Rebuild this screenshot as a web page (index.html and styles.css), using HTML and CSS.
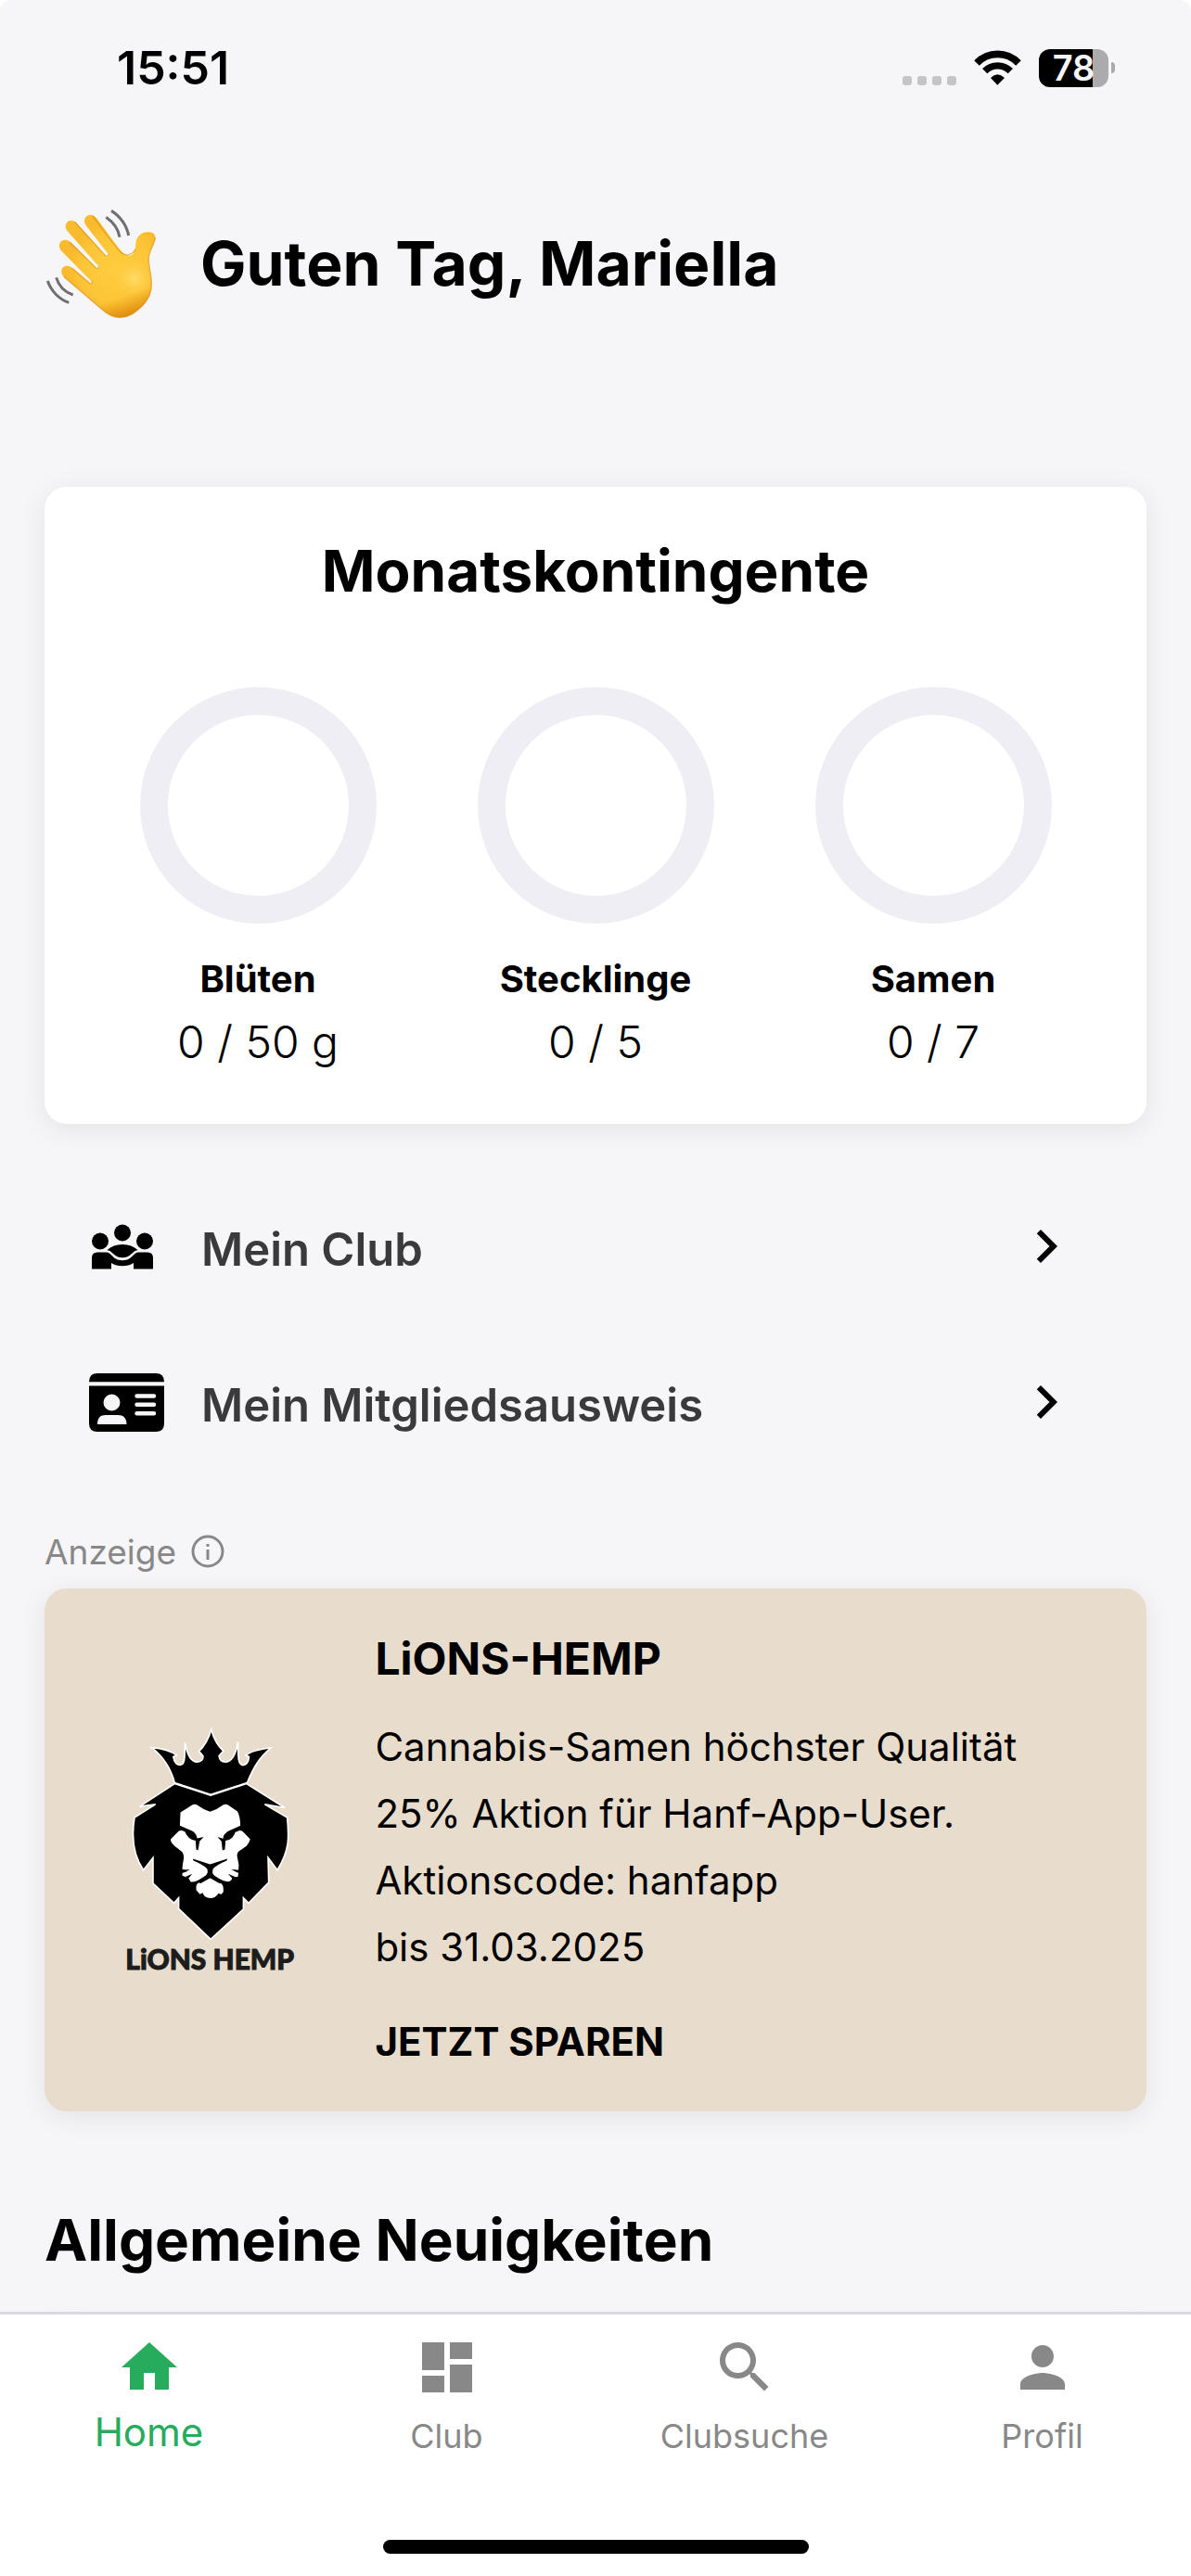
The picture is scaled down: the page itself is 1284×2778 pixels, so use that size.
FILE: index.html
```html
<!DOCTYPE html>
<html lang="de">
<head>
    <meta charset="UTF-8">
    <meta name="viewport" content="width=device-width, initial-scale=1.0">
    <title>Home</title>
    <link rel="stylesheet" href="styles.css">
</head>
<body>
    <div class="app">
        <div class="statusbar">
            <span class="clock">15:51</span>
            <div class="status-icons">
                <div class="signal"><span></span><span></span><span></span><span></span></div>
                <svg class="wifi" viewBox="330 70 153 114" aria-hidden="true">
                    <path d="M339 112A93 93 0 0 1 474 112" fill="none" stroke="#000" stroke-width="23"/>
                    <path d="M365 138A58 58 0 0 1 448 138" fill="none" stroke="#000" stroke-width="22"/>
                    <path d="M384 160Q406 138 429 160L406 183Z"/>
                </svg>
                <div class="battery"><span class="battery-level">78</span><span class="battery-tip"></span></div>
            </div>
        </div>

        <main class="content">
            <header class="greeting">
                <svg class="wave" viewBox="54 72 366 360" aria-hidden="true">
                    <defs>
                        <radialGradient id="skin" gradientUnits="userSpaceOnUse" cx="290" cy="270" r="200">
                            <stop offset="0" stop-color="#ffcd3f"/>
                            <stop offset="0.55" stop-color="#fdc538"/>
                            <stop offset="0.8" stop-color="#f9b92c"/>
                            <stop offset="1" stop-color="#f9bb30"/>
                        </radialGradient>
                        <linearGradient id="shade" gradientUnits="userSpaceOnUse" x1="300" y1="360" x2="325" y2="435">
                            <stop offset="0" stop-color="#d98200" stop-opacity="0"/>
                            <stop offset="1" stop-color="#d07a00" stop-opacity="0.85"/>
                        </linearGradient>
                        <radialGradient id="glow" gradientUnits="userSpaceOnUse" cx="345" cy="300" r="60">
                            <stop offset="0" stop-color="#ffdc6a"/>
                            <stop offset="1" stop-color="#ffd04a" stop-opacity="0"/>
                        </radialGradient>
                        <path id="hand" d="M412 168C412 154 398 150 384 151C364 152 351 168 349 186C348 210 343 228 326 227C314 226 304 214 292 200L222 106C212 92 194 92 186 104C180 114 184 122 190 132L260 222C264 229 257 233 252 227L158 122C148 110 131 111 125 122C118 135 124 143 132 152L229 262C233 270 227 273 221 267L142 187C128 172 112 174 105 184C98 195 103 205 110 213L205 310C211 317 207 321 200 316L147 270C136 258 119 258 112 267C104 277 110 289 118 297L240 401C262 420 282 428 300 427C328 426 348 412 372 388C394 364 401 342 400 315C400 285 389 262 391 234C393 208 411 190 412 168Z"/>
                    </defs>
                    <use href="#hand" fill="url(#skin)"/>
                    <use href="#hand" fill="url(#glow)"/>
                    <use href="#hand" fill="url(#shade)"/>
                    <path d="M210 99L260 166L296 212Q326 240 349 206M152 118L250 226Q262 232 260 222M136 184L221 267Q230 273 229 262M143 268L200 316Q210 320 206 310M116 295L240 401C262 420 282 428 300 427C328 426 348 412 372 388C394 364 401 342 400 315C400 285 389 262 391 234C393 208 411 190 412 168" fill="none" stroke="#d98b12" stroke-width="4" opacity="0.6"/>
                    <path d="M270 82C298 98 320 130 326 162M253 103C275 118 292 140 297 167M92 298C100 325 120 345 146 354M64 309C75 340 100 368 133 379" fill="none" stroke="#6f6f6f" stroke-width="9"/>
                </svg>
                <h1>Guten Tag, Mariella</h1>
            </header>

            <section class="card quota">
                <h2>Monatskontingente</h2>
                <div class="quota-grid">
                    <div class="quota-item">
                        <div class="ring"></div>
                        <h3>Blüten</h3>
                        <p>0 / 50 g</p>
                    </div>
                    <div class="quota-item">
                        <div class="ring"></div>
                        <h3>Stecklinge</h3>
                        <p>0 / 5</p>
                    </div>
                    <div class="quota-item">
                        <div class="ring"></div>
                        <h3>Samen</h3>
                        <p>0 / 7</p>
                    </div>
                </div>
            </section>

            <nav class="links">
                <a class="link-row" href="#club">
                    <svg class="link-icon" viewBox="-3 -7.5 81 63" aria-hidden="true">
                        <circle cx="33" cy="9" r="9"/>
                        <circle cx="9" cy="18" r="9"/>
                        <circle cx="57" cy="18" r="9"/>
                        <path d="M16.500 27.500Q23 21.500 33 21.500T49.500 27.500Q46 28 43 31.500Q39 35.700 33 35.700T23 31.500Q20 28 16.500 27.500Z"/>
                        <path d="M0 48V36Q0 30 6 30H15C22 30 22 38.700 33 38.700S44 30 51 30H60Q66 30 66 36V48H45V41.500Q40 44.700 33 44.700T21 41.500V48Z"/>
                    </svg>
                    <span class="link-text">Mein Club</span>
                    <svg class="chevron" viewBox="0 0 24 24" aria-hidden="true"><path d="M10 6L8.590 7.410 13.170 12l-4.580 4.590L10 18l6-6z"/></svg>
                </a>
                <a class="link-row" href="#ausweis">
                    <svg class="link-icon" viewBox="0 0 81 63" aria-hidden="true">
                        <path d="M0 9.300Q0 0 9 0H72Q81 0 81 9.300Z"/>
                        <path fill-rule="evenodd" d="M0 13.500H81V54Q81 63 72 63H9Q0 63 0 54ZM24.500 22.500A9 9 0 0 0 24.500 40.500A9 9 0 0 0 24.500 22.500ZM9 55H40.500C40.500 48 37 45 31 45H18C12 45 9 48 9 55ZM51.500 22.300A2.200 2.200 0 0 0 51.500 26.700H70A2.200 2.200 0 0 0 70 22.300ZM51.500 31.500A2.200 2.200 0 0 0 51.500 35.900H70A2.200 2.200 0 0 0 70 31.500ZM51.500 41A2.200 2.200 0 0 0 51.500 45.400H70A2.200 2.200 0 0 0 70 41Z"/>
                    </svg>
                    <span class="link-text">Mein Mitgliedsausweis</span>
                    <svg class="chevron" viewBox="0 0 24 24" aria-hidden="true"><path d="M10 6L8.590 7.410 13.170 12l-4.580 4.590L10 18l6-6z"/></svg>
                </a>
            </nav>

            <div class="ad-label">
                <span>Anzeige</span>
                <button type="button" class="info" aria-label="Info">
                    <svg viewBox="0 0 36 36" aria-hidden="true">
                        <circle cx="18" cy="18" r="16" fill="none" stroke="#888" stroke-width="3"/>
                        <path d="M16.500 10h3v3h-3zM16.500 16h3v11h-3z" fill="#888"/>
                    </svg>
                </button>
            </div>

            <section class="card ad">
                <div class="ad-logo">
                    <svg viewBox="45 40 550 800" role="img" aria-label="LiONS HEMP">
                        <g stroke="#fff" stroke-width="5">
                            <path d="M205 225L322 263L438 225L562 303L497 292L570 335C576 400 578 440 538 505L508 465L510 545L445 612L428 595L428 632L322 729L218 630L218 595L203 612L135 548L135 465L104 505C66 450 66 390 75 335L143 292L92 299Z"/>
                            <path d="M131 108C160 110 190 116 211 133L201 138C203 158 215 165 224 164C237 162 238 150 239 92C245 128 256 154 278 155C292 154 298 147 297 135L284 120C300 105 315 80 324 50C332 80 346 104 363 119L349 135C350 148 358 154 370 155C390 154 404 128 410 90C411 150 412 162 425 165C438 164 445 152 446 138L436 133C455 116 490 112 518 109C478 140 460 175 440 222L322 260L205 222C192 172 165 135 131 108Z"/>
                        </g>
                        <g fill="#fff">
                            <path d="M224 318L262 294Q270 290 278 294Q296 308 320 316Q344 308 362 294Q370 290 378 294L408 314Q418 330 418 361L372 382L405 381L416 377Q424 377 430 384L450 405Q446 418 438 427L412 445Q406 452 408 462L413 488L412 505L396 507L412 513L410 527L393 528Q390 541 378 543Q362 542 345 532L328 517H312L298 530Q275 545 256 543Q255 535 248 530L230 523V514L248 508L230 502L231 488L235 465Q234 450 228 445L205 427Q192 415 192 405L218 379Q226 374 236 380L270 382L222 361Z"/>
                            <path d="M320 530L350 544Q363 550 363 565V576L356 584L347 580Q338 596 320 596T296 579L287 583L275 570V558Q277 547 290 543Z"/>
                        </g>
                        <path d="M236 376L262 380Q276 386 278 402L299 398L286 412L281 441L275 438L273 410Q248 407 236 376ZM404 376L380 380Q362 388 362 403L344 398L357 412L360 441L368 438L370 410Q396 407 404 376Z"/>
                        <path d="M264 468L320 486L376 468L374 474Q338 489 329 502Q326 512 330 522L366 542L350 548L320 531L290 548L274 543L308 522Q315 512 311 502Q302 489 266 474Z"/>
                        <path d="M228 505L255 503L232 514ZM412 505L388 503L411 514ZM240 527L262 517L250 532ZM401 527L378 517L392 532Z"/>
                        <text class="logo-text" x="319" y="826" text-anchor="middle">LiONS HEMP</text>
                    </svg>
                </div>
                <div class="ad-body">
                    <h3>LiONS-HEMP</h3>
                    <p>Cannabis-Samen höchster Qualität<br>25% Aktion für Hanf-App-User.<br>Aktionscode: hanfapp<br>bis 31.03.2025</p>
                    <a href="#sparen">JETZT SPAREN</a>
                </div>
            </section>

            <h2 class="news-title">Allgemeine Neuigkeiten</h2>
            <section class="card news"></section>
        </main>

        <footer class="tabbar">
            <nav class="tabs">
                <a class="tab active" href="#home">
                    <svg viewBox="0 0 24 24" aria-hidden="true"><path d="M10 20v-6h4v6h5v-8h3L12 3 2 12h3v8z"/></svg>
                    <span>Home</span>
                </a>
                <a class="tab" href="#club">
                    <svg viewBox="0 0 24 24" aria-hidden="true"><path d="M3 13h8V3H3v10zm0 8h8v-6H3v6zm10 0h8V11h-8v10zm0-18v6h8V3h-8z"/></svg>
                    <span>Club</span>
                </a>
                <a class="tab" href="#clubsuche">
                    <svg viewBox="0 0 24 24" aria-hidden="true"><path d="M15.500 14h-.79l-.28-.27C15.410 12.590 16 11.110 16 9.500 16 5.910 13.090 3 9.500 3S3 5.910 3 9.500 5.910 16 9.500 16c1.610 0 3.090-.59 4.230-1.570l.27.28v.79l5 4.990L20.490 19l-4.990-5zm-6 0C7.010 14 5 11.990 5 9.500S7.010 5 9.500 5 14 7.010 14 9.500 11.990 14 9.500 14z"/></svg>
                    <span>Clubsuche</span>
                </a>
                <a class="tab" href="#profil">
                    <svg viewBox="0 0 24 24" aria-hidden="true"><path d="M12 12c2.210 0 4-1.790 4-4s-1.790-4-4-4-4 1.790-4 4 1.790 4 4 4zm0 2c-2.670 0-8 1.340-8 4v2h16v-2c0-2.660-5.330-4-8-4z"/></svg>
                    <span>Profil</span>
                </a>
            </nav>
            <div class="home-indicator"></div>
        </footer>
    </div>
</body>
</html>
```
FILE: styles.css
```css
* {
    box-sizing: border-box;
}
body {
    margin: 0;
    background: #fff;
    color: #000;
    font-family: Inter, "Liberation Sans", sans-serif;
}
h1, h2, h3, p {
    margin: 0;
}
a {
    color: inherit;
    text-decoration: none;
}
svg {
    display: block;
}
.app {
    display: flex;
    flex-direction: column;
    height: 100vh;
    background: #f6f6f8;
    border-radius: 12px 12px 0 0;
    overflow: hidden;
}

/* status bar */
.statusbar {
    display: flex;
    justify-content: space-between;
    align-items: center;
    flex: none;
    height: 146px;
    padding: 0 82px 0 126px;
}
.clock {
    font-size: 50px;
    font-weight: 600;
}
.status-icons {
    display: flex;
    align-items: center;
    gap: 19px;
}
.signal {
    display: flex;
    gap: 6px;
    align-self: flex-end;
    padding-bottom: 2px;
}
.signal span {
    width: 10px;
    height: 10px;
    border-radius: 3px;
    background: #c5c5c7;
}
.wifi {
    width: 51px;
    height: 38px;
}
.battery {
    display: flex;
    align-items: center;
    gap: 3px;
}
.battery-level {
    width: 75px;
    height: 41px;
    border-radius: 12px;
    background: linear-gradient(to right, #000 78%, #ababad 78%);
    color: #f6f6f8;
    font-size: 38px;
    font-weight: 600;
    line-height: 41px;
    text-align: center;
}
.battery-tip {
    width: 4px;
    height: 12px;
    border-radius: 0 4px 4px 0;
    background: #ababad;
}

/* content */
.content {
    flex: 1;
    min-height: 0;
    padding: 0 48px;
    overflow: hidden;
}
.greeting {
    display: flex;
    align-items: center;
    gap: 46px;
    padding: 78px 0 181px;
}
.wave {
    flex: none;
    width: 122px;
    height: 120px;
}
h1 {
    font-size: 66px;
    font-weight: 700;
    line-height: 80px;
}
h2 {
    font-size: 62px;
    font-weight: 700;
    line-height: 80px;
}
.card {
    border-radius: 24px;
    background: #fff;
    box-shadow: 0 6px 30px rgba(0, 0, 0, 0.08);
}
.quota {
    padding: 51px 48px 50px;
    text-align: center;
}
.quota-grid {
    display: grid;
    grid-template-columns: repeat(3, 1fr);
    margin-top: 85px;
}
.ring {
    width: 255px;
    height: 255px;
    margin: 0 auto 30px;
    border: 30px solid #efeef4;
    border-radius: 50%;
}
.quota-item h3 {
    font-size: 40px;
    font-weight: 700;
    line-height: 60px;
}
.quota-item p {
    font-size: 48px;
    font-weight: 300;
    line-height: 76px;
}

/* link rows */
.links {
    margin-top: 48px;
}
.link-row {
    display: flex;
    align-items: center;
    height: 168px;
    padding: 0 72px 0 48px;
}
.link-icon {
    flex: none;
    width: 81px;
    height: 63px;
}
.link-text {
    flex: 1;
    padding: 6px 0 0 40px;
    color: #3a3a3c;
    font-size: 49px;
    font-weight: 600;
}
.chevron {
    width: 72px;
    height: 72px;
}

/* advert */
.ad-label {
    display: flex;
    align-items: center;
    gap: 16px;
    height: 48px;
    margin: 53px 0 16px;
    color: #888;
    font-size: 37px;
}
.info {
    padding: 0;
    border: none;
    background: none;
}
.info svg {
    width: 36px;
    height: 36px;
}
.ad {
    display: flex;
    align-items: center;
    background: #e8dccc;
}
.ad-logo {
    flex: 0 0 30%;
}
.ad-logo svg {
    width: 183px;
    margin: 0 auto;
}
.logo-text {
    fill: #1c1c1c;
    stroke: #1c1c1c;
    stroke-width: 3px;
    font-family: Lato, sans-serif;
    font-size: 90px;
    font-weight: 900;
}
.ad-body {
    flex: 1;
    padding: 46px 48px 45px 0;
}
.ad-body h3 {
    font-size: 48px;
    font-weight: 700;
    line-height: 60px;
}
.ad-body p {
    margin: 29px 0 36px;
    font-size: 42px;
    line-height: 72px;
}
.ad-body a {
    display: block;
    font-size: 42px;
    font-weight: 700;
    line-height: 60px;
}
.news-title {
    margin-top: 99px;
}
.news {
    height: 400px;
    margin-top: 48px;
}

/* bottom tabs */
.tabbar {
    display: flex;
    flex: none;
    flex-direction: column;
    justify-content: space-between;
    height: 285px;
    padding: 21px 0 24px;
    border-top: 3px solid #d9d9df;
    background: #fff;
}
.tabs {
    display: grid;
    grid-template-columns: repeat(4, 1fr);
}
.tab {
    display: flex;
    flex-direction: column;
    align-items: center;
    color: #888;
    font-size: 36px;
    line-height: 76px;
}
.tab.active {
    color: #27ab5d;
    font-size: 42px;
    line-height: 68px;
}
.tab svg {
    width: 72px;
    height: 72px;
    fill: currentColor;
}
.home-indicator {
    width: 459px;
    height: 15px;
    margin: 0 auto;
    border-radius: 8px;
    background: #000;
}
```
